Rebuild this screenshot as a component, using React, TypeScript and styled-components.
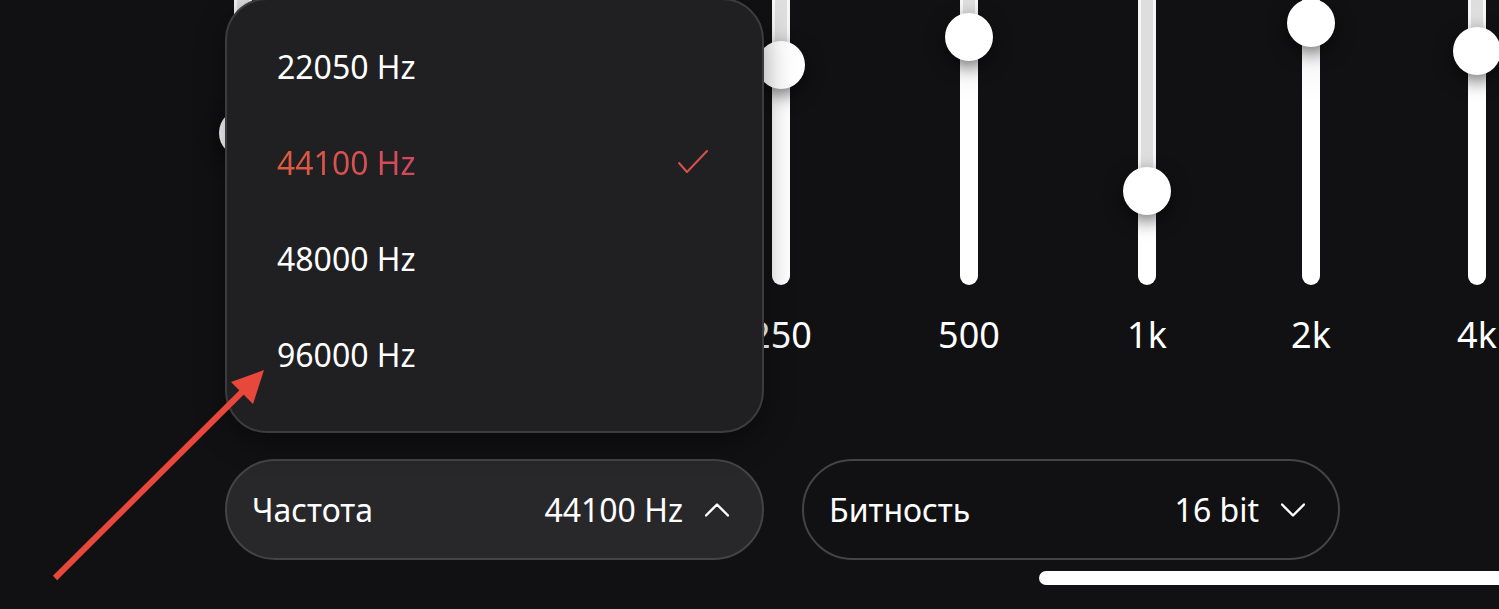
import React from 'react';
import styled, { createGlobalStyle, css } from 'styled-components';

const GlobalStyle = createGlobalStyle`
    html, body {
        margin:0;
        padding:0;
        background:#111113;
    }
    body{
        font-family:"Noto Sans", "Open Sans", sans-serif;
        color:#fff;
    }
`;

const Screen = styled.div`
    position:relative;
    width:1499px;
    height:609px;
    overflow:hidden;
    background:#111113;
`;

const Equalizer = styled.div`
    display:flex;
    flex-direction:row;
    margin-top:-20px;
    padding-left:153px;
`;

const Band = styled.div<{w:number}>`
    display:flex;
    flex-direction:column;
    align-items:center;
    flex-shrink:0;
    width:${p=>p.w}px;
`;

const Track = styled.div`
    position:relative;
    width:18px;
    height:305px;
    border-radius:9px;
    background:linear-gradient(180deg,#e9e9e9 0%,#ffffff 40%);
`;

const TrackFill = styled.div`
    position:absolute;
    left:0;
    top:0;
    width:18px;
    border-radius:9px 9px 0 0;
    background:#dedede;
    box-shadow:inset 3px 0 0 #f6f6f6, inset -3px 0 0 #f6f6f6;
`;

const Knob = styled.div`
    position:absolute;
    left:50%;
    width:48px;
    height:48px;
    margin-left:-24px;
    border-radius:50%;
    background:#fff;
    box-shadow:0 6px 18px rgba(0,0,0,0.55);
`;

const BandLabel = styled.span`
    margin-top:26px;
    height:48px;
    font-size:36px;
    line-height:48px;
    color:#fff;
    white-space:nowrap;
`;

const Controls = styled.div`
    display:flex;
    flex-direction:row;
    gap:38px;
    margin-top:100px;
    padding-left:225px;
`;

const SelectPill = styled.div<{open?:boolean}>`
    box-sizing:border-box;
    display:flex;
    flex-direction:row;
    align-items:center;
    justify-content:space-between;
    height:101px;
    padding:0 33px 0 25px;
    border-radius:51px;
    border:2px solid #444446;
    font-size:32px;
    ${p=>p.open?
    css`
        background:#28282a;
        width:539px;
    `
    :
    css`
        background:transparent;
        width:538px;
    `}
`;

const PillValue = styled.div`
    display:flex;
    align-items:center;
    gap:22px;
`;

const Menu = styled.div`
    position:absolute;
    left:225px;
    top:-2px;
    box-sizing:border-box;
    width:539px;
    height:435px;
    padding:18px 0 0 0;
    border-radius:42px;
    border:2px solid #3c3c3e;
    background:#202022;
    box-shadow:0 10px 30px rgba(0,0,0,0.4);
`;

const MenuItem = styled.div<{selected?:boolean}>`
    display:flex;
    align-items:center;
    justify-content:space-between;
    height:96px;
    padding:0 54px 0 50px;
    font-size:32px;
    & > span{
        ${p=>p.selected?
        css`
            background:linear-gradient(90deg,#de5c3c 0%,#d44760 100%);
            -webkit-background-clip:text;
            background-clip:text;
            color:transparent;
        `
        :
        css`
            color:#fff;
        `}
    }
`;

const Pointer = styled.svg`
    position:absolute;
    left:0;
    top:0;
    pointer-events:none;
`;

const HomeIndicator = styled.div`
    position:absolute;
    left:1039px;
    top:571px;
    width:520px;
    height:14px;
    border-radius:7px;
    background:#fff;
`;

// the first three bands sit under the open menu, so their captions are not drawn
const bands = [
    {id:'31', label:'', w:180, knob:133},
    {id:'62', label:'', w:180, knob:110},
    {id:'125', label:'', w:180, knob:90},
    {id:'250', label:'250', w:176, knob:65},
    {id:'500', label:'500', w:200, knob:37},
    {id:'1k', label:'1k', w:156, knob:191},
    {id:'2k', label:'2k', w:172, knob:23},
    {id:'4k', label:'4k', w:160, knob:51},
];

const rates = ['22050 Hz','44100 Hz','48000 Hz','96000 Hz'];

const Chevron = ({up}:{up?:boolean}) => (
    <svg width="24" height="14" viewBox="0 0 24 14" fill="none">
        <path d={up?"M1 12.5 L12 1.5 L23 12.5":"M1 1.5 L12 12.5 L23 1.5"} stroke="#fff" strokeWidth="2.4" strokeLinecap="round" strokeLinejoin="round"/>
    </svg>
);

const App = () => {
    return (
        <>
        <GlobalStyle/>
        <Screen>
            <Equalizer>
                {bands.map(b=>(
                    <Band key={b.id} w={b.w}>
                        <Track>
                            <TrackFill style={{height:b.knob+20}}/>
                            <Knob style={{top:b.knob+20-24}}/>
                        </Track>
                        <BandLabel>{b.label}</BandLabel>
                    </Band>
                ))}
            </Equalizer>
            <Controls>
                <SelectPill open>
                    <span>Частота</span>
                    <PillValue>44100 Hz <Chevron up/></PillValue>
                </SelectPill>
                <SelectPill>
                    <span>Битность</span>
                    <PillValue>16 bit <Chevron/></PillValue>
                </SelectPill>
            </Controls>
            <Menu>
                {rates.map(r=>(
                    <MenuItem key={r} selected={r==='44100 Hz'}>
                        <span>{r}</span>
                        {r==='44100 Hz'?(
                            <svg width="30" height="24" viewBox="0 0 30 24" fill="none">
                                <path d="M1 13 L9 22 L29 1" stroke="#d8504c" strokeWidth="2" strokeLinecap="round" strokeLinejoin="round"/>
                            </svg>
                        ):(<></>)}
                    </MenuItem>
                ))}
            </Menu>
            <Pointer width="1499" height="609" viewBox="0 0 1499 609">
                <line x1="55" y1="578" x2="244" y2="390" stroke="#e8473b" strokeWidth="6"/>
                <polygon points="264,370 231,382 253,404" fill="#e8473b"/>
            </Pointer>
            <HomeIndicator/>
        </Screen>
        </>
    );
}

export default App;
